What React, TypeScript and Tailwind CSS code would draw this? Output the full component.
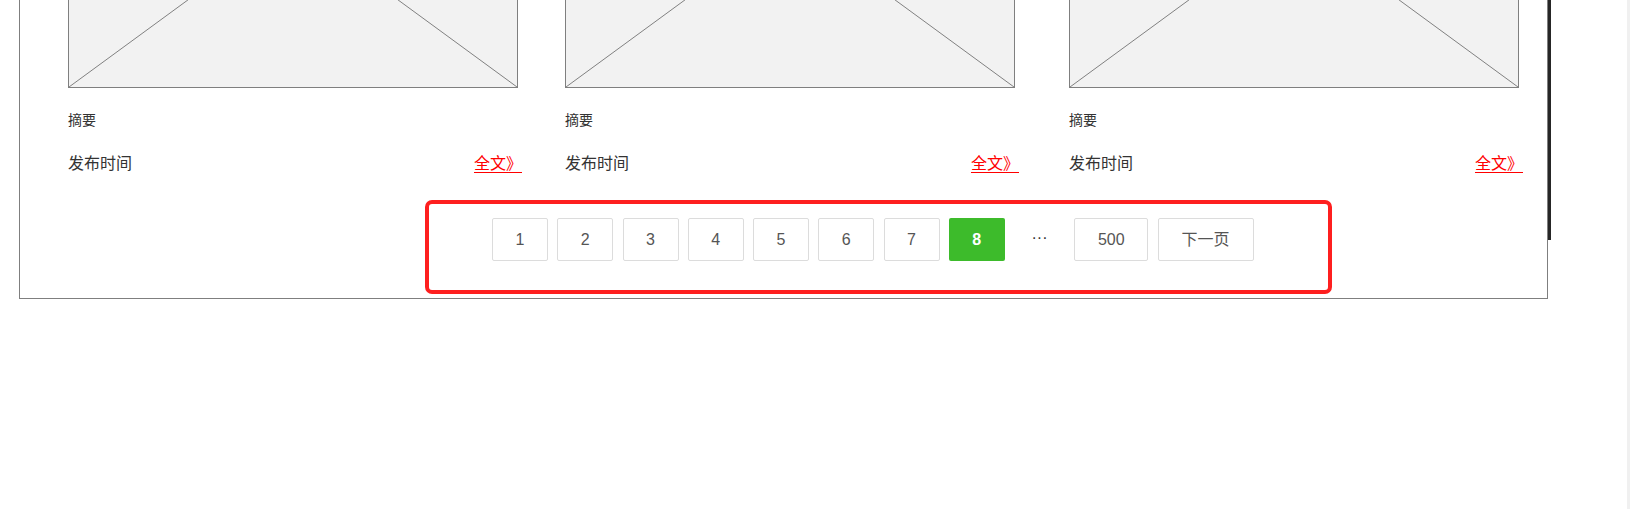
import React from "react";

const FONT = { fontFamily: '"Liberation Sans", "Noto Sans CJK SC", sans-serif' };

function Placeholder() {
  return (
    <div className="relative w-[450px] h-[330px] border border-[#7f7f7f] bg-[#f2f2f2]">
      <svg className="absolute inset-0 w-full h-full" viewBox="0 0 100 100" preserveAspectRatio="none">
        <line x1="0" y1="100" x2="100" y2="0" stroke="#808080" strokeWidth="1" vectorEffect="non-scaling-stroke" />
        <line x1="0" y1="0" x2="100" y2="100" stroke="#808080" strokeWidth="1" vectorEffect="non-scaling-stroke" />
      </svg>
    </div>
  );
}

function Card({ className }: { className?: string }) {
  return (
    <div className={"w-[454px] " + (className ?? "")}>
      <Placeholder />
      <div className="mt-[22px] text-[14px] leading-[20px] text-[#333333]">摘要</div>
      <div className="mt-[22px] flex justify-between text-[16px] leading-[24px]">
        <span className="text-[#333333]">发布时间</span>
        <a className="text-[#ff0000] underline underline-offset-[3px]">全文》</a>
      </div>
    </div>
  );
}

function PageBtn({ label, w = "w-[56px]" }: { label: string; w?: string }) {
  return (
    <div className={w + " h-[43px] flex items-center justify-center border border-[#dcdcdc] rounded-[2px] text-[16px] text-[#555555] bg-white"}>
      {label}
    </div>
  );
}

export default function App() {
  return (
    <div className="flex w-[1630px] h-[509px] overflow-hidden bg-white" style={FONT}>
      <div className="flex-1 min-w-0">
        <div className="flex items-start mt-[-243px] ml-[19px]">
          <div className="w-[1529px] border border-[#7f7f7f] pb-[4px]">
            <div className="flex pl-[48px]">
              <Card />
              <Card className="ml-[43px]" />
              <Card className="ml-[50px]" />
            </div>
            <div className="mt-[24px] ml-[405px] w-[907px] h-[94px] border-4 border-[#fe1f1f] rounded-[7px] pt-[14px] pl-[63px]">
              <div className="flex items-center gap-[9.25px]">
                <PageBtn label="1" />
                <PageBtn label="2" />
                <PageBtn label="3" />
                <PageBtn label="4" />
                <PageBtn label="5" />
                <PageBtn label="6" />
                <PageBtn label="7" />
                <div className="w-[56px] h-[43px] flex items-center justify-center rounded-[2px] bg-[#3dbb2b] text-white font-bold text-[16px]">
                  8
                </div>
                <div className="w-[51px] h-[43px] flex items-start justify-center pt-[8px] text-[16px] text-[#333333]">
                  ···
                </div>
                <PageBtn label="500" w="w-[74px]" />
                <PageBtn label="下一页" w="w-[96px]" />
              </div>
            </div>
          </div>
          <div className="w-[3px] h-[483px] bg-[#262626]" />
        </div>
      </div>
      <div className="w-[3px] h-full bg-[#f0f0f0]" />
    </div>
  );
}
